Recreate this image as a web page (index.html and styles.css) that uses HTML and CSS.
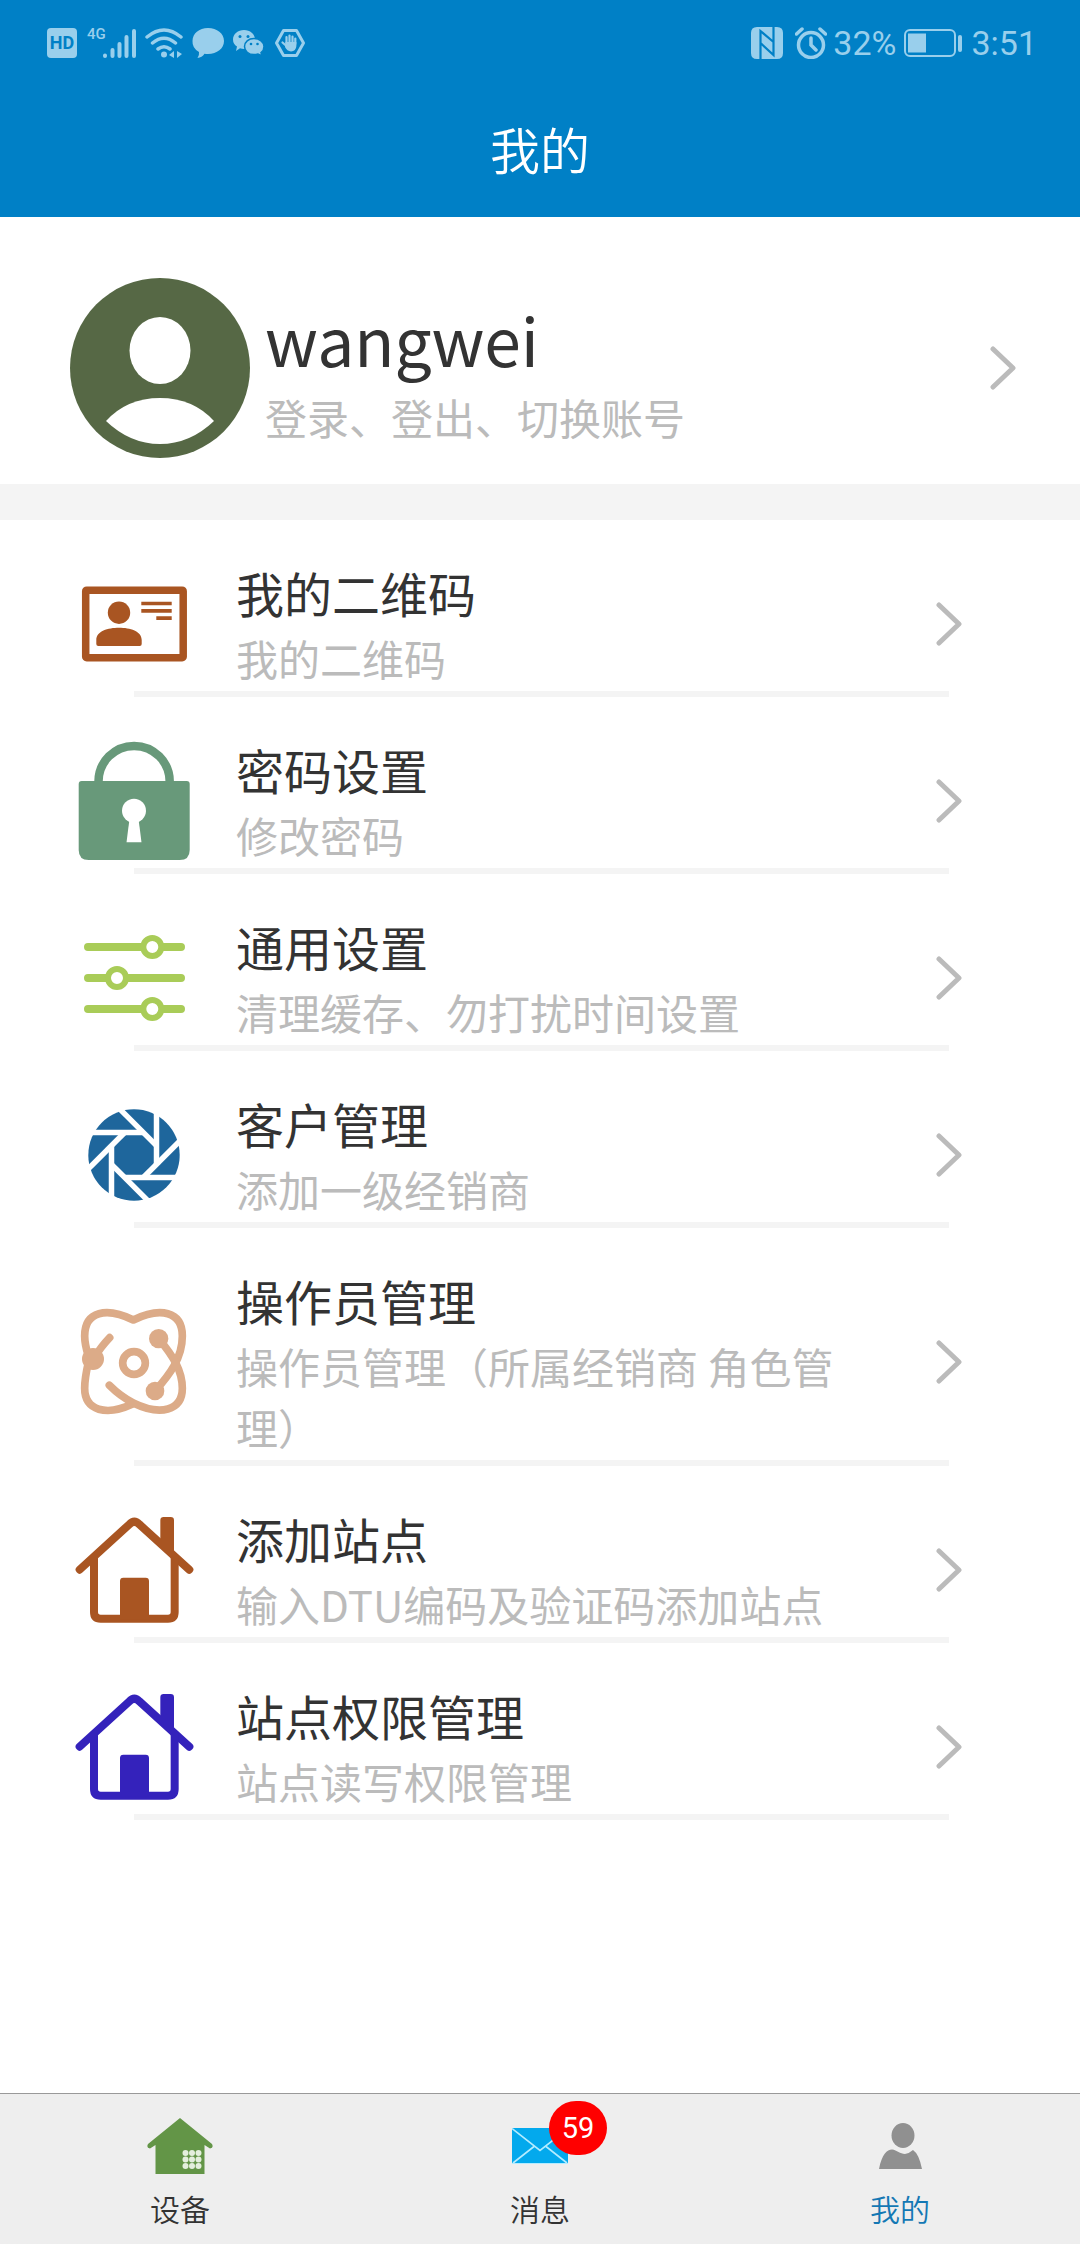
FILE: index.html
```
<!DOCTYPE html>
<html lang="zh-CN">
<head>
<meta charset="utf-8">
<meta name="viewport" content="width=device-width, initial-scale=1">
<title>我的</title>
<link rel="stylesheet" href="styles.css">
</head>
<body>
<svg class="defs" aria-hidden="true">
  <symbol id="chevron" viewBox="0 0 26 44">
    <path d="M3 3L23 22L3 41" fill="none" stroke="#bbb" stroke-width="5" stroke-linecap="round" stroke-linejoin="round"/>
  </symbol>
  <symbol id="house" viewBox="84 729 396 396">
    <path d="M119 926L268 790Q283 775 298 790L448 926" fill="none" stroke="currentColor" stroke-width="24" stroke-linecap="round"/>
    <path d="M162 885V1053Q162 1073 182 1073H384Q404 1073 404 1053V885" fill="none" stroke="currentColor" stroke-width="24"/>
    <path d="M361 835V778Q361 768 371 768H392Q402 768 402 778V875ZM240 1075V960Q240 950 250 950H317Q327 950 327 960V1075Z" fill="currentColor"/>
  </symbol>
</svg>

<header class="header">
  <div class="status">
    <div class="status-left">
      <span class="hd">HD</span>
      <span class="net">4G</span>
      <svg class="signal" width="33" height="32" viewBox="0 0 33 32" stroke="currentColor" stroke-width="4" stroke-linecap="round"><path d="M2 28.500V29M9.500 23V29M16.500 17V29M23.500 10V29M31 4V29"/></svg>
      <svg class="wifi" width="38" height="32" viewBox="0 0 38 32" fill="none" stroke="currentColor" stroke-width="3.500" stroke-linecap="round">
        <path d="M2 10Q19 -4 36 10M7.500 16Q19 6.500 30.500 16M13 22Q19 17.500 25 22"/>
        <circle cx="19" cy="27.500" r="3" fill="currentColor" stroke="none"/>
        <path d="M29 24V31L24 28ZM32 31V24L37 27Z" fill="currentColor" stroke="none"/>
      </svg>
      <svg class="bubble" width="32" height="32" viewBox="0 0 32 32" fill="currentColor"><path d="M16 1C25 1 32 6.500 32 14S25 27 16 27Q14 27 12.500 26.800Q10 30.500 5.500 31Q7.500 28 7 25Q0 21 .5 14C.5 6.500 7 1 16 1Z"/></svg>
      <svg class="wechat" width="32" height="28" viewBox="0 0 32 28">
        <path d="M11 1C17 1 22 5 22 10.500S17 20 11 20Q9 20 7 19.300L3 22L4 17.500Q0 15 0 10.500C0 5 5 1 11 1Z" fill="currentColor"/>
        <path d="M21 9.500C26.500 9.500 31 13 31 17.500Q31 21.500 28 23.500L29 27L25 25Q23 25.600 21 25.600C15.500 25.600 11.500 22 11.500 17.500S15.500 9.500 21 9.500Z" fill="currentColor" stroke="#0080c6" stroke-width="1.500"/>
        <g fill="#0080c6"><circle cx="7" cy="7.500" r="1.500"/><circle cx="15" cy="7.500" r="1.500"/><circle cx="18" cy="15" r="1.300"/><circle cx="24.500" cy="15" r="1.300"/></g>
      </svg>
      <svg class="stop" width="32" height="28" viewBox="0 0 32 28" fill="none" stroke="currentColor" stroke-linecap="round">
        <path d="M9.500 1.500H22.500L29.500 14L22.500 26.500H9.500L2.500 14Z" stroke-width="3" stroke-linejoin="round"/>
        <path d="M12.500 14V8M15.500 13V6.500M18.500 13V7.500M21.300 15V9.500M12.500 17L8.500 13.500" stroke-width="2.200"/>
        <path d="M11.400 13H22.400V17Q22 22 17 22.500Q13 22 11 18Z" fill="currentColor" stroke="none"/>
      </svg>
    </div>
    <div class="status-right">
      <svg class="nfc" width="32" height="32" viewBox="0 0 32 32"><path d="M6 0H26Q32 0 32 6V26Q32 32 26 32H6Q0 32 0 26V6Q0 0 6 0Z" fill="currentColor"/><path d="M9.500 32V4L22.500 15V0M9.500 16L22.500 28V10" fill="none" stroke="#0080c6" stroke-width="2.200"/></svg>
      <svg class="alarm" width="32" height="32" viewBox="0 0 32 32" fill="none" stroke="currentColor" stroke-width="3.500"><circle cx="16" cy="18" r="12.500"/><path d="M16 11V18L21 23M1.500 7L7 2M25 2L30.500 7" stroke-linecap="round"/></svg>
      <span class="percent">32%</span>
      <svg class="battery" width="59" height="28" viewBox="0 0 59 28"><rect x="1" y="1" width="50" height="26" rx="5" fill="none" stroke="currentColor" stroke-width="2"/><path d="M4 4.500H22V23.500H4Z" fill="currentColor"/><rect x="54" y="6" width="4" height="17" rx="2" fill="currentColor"/></svg>
      <span class="time">3:51</span>
    </div>
  </div>
  <h1 class="title">我的</h1>
</header>

<main class="main">
  <a class="profile" href="#account">
    <svg class="avatar" viewBox="0 0 180 180" aria-hidden="true"><circle cx="90" cy="90" r="90" fill="#566845"/><ellipse cx="90" cy="72.500" rx="30.500" ry="33.500" fill="#fff"/><path d="M36 143Q57 120 90 120T144 143Q120 166 90 166T36 143Z" fill="#fff"/></svg>
    <span class="profile-text">
      <span class="name">wangwei</span>
      <span class="sub">登录、登出、切换账号</span>
    </span>
    <svg class="chevron" aria-hidden="true"><use href="#chevron"/></svg>
  </a>

  <nav class="list">
    <a class="row" href="#qrcode">
      <svg class="icon" viewBox="0 0 132 132" aria-hidden="true" fill="#a95522"><rect x="17.700" y="32.200" width="97.500" height="67.500" rx="1" fill="none" stroke="#a95522" stroke-width="7.500"/><circle cx="51" cy="54.700" r="11.200"/><path d="M28.300 86V82C28.300 73 40 69.700 51 69.700S73.700 73 73.700 82V86Q73.700 88 71.700 88H30.300Q28.300 88 28.300 86ZM73.300 43.700H103.700V47.300H73.300ZM73.300 51H103.700V54.700H73.300ZM88.300 58.300H103.700V62H88.300Z"/></svg>
      <span class="text"><span class="label">我的二维码</span><span class="sub">我的二维码</span></span>
      <svg class="chevron" aria-hidden="true"><use href="#chevron"/></svg>
    </a>
    <a class="row" href="#password">
      <svg class="icon" viewBox="0 0 132 132" aria-hidden="true"><path d="M30.500 48V46.500A35.600 35.600 0 0 1 101.700 46.500V48" fill="none" stroke="#68997a" stroke-width="8.500"/><path d="M13.700 46H118.700Q121.700 46 121.700 49V115Q121.700 125 111.700 125H20.700Q10.700 125 10.700 115V49Q10.700 46 13.700 46Z" fill="#68997a"/><circle cx="66" cy="75.700" r="12" fill="#fff"/><path d="M61.500 84H70.500L73.500 107.300H58.500Z" fill="#fff"/></svg>
      <span class="text"><span class="label">密码设置</span><span class="sub">修改密码</span></span>
      <svg class="chevron" aria-hidden="true"><use href="#chevron"/></svg>
    </a>
    <a class="row" href="#settings">
      <svg class="icon" viewBox="0 0 132 132" aria-hidden="true" stroke="#a9cc58"><path d="M20 35H113M20 66H113M20 97H113" stroke-width="8" stroke-linecap="round"/><g fill="#fff" stroke-width="6"><circle cx="84.300" cy="35" r="9"/><circle cx="49" cy="66" r="9"/><circle cx="84.300" cy="97" r="9"/></g></svg>
      <span class="text"><span class="label">通用设置</span><span class="sub">清理缓存、勿打扰时间设置</span></span>
      <svg class="chevron" aria-hidden="true"><use href="#chevron"/></svg>
    </a>
    <a class="row" href="#customers">
      <svg class="icon" viewBox="-66 -66 132 132" aria-hidden="true"><circle r="45.700" fill="#1e669c"/><g stroke="#fff" stroke-width="5.500"><path id="blade" d="M-52 -22.500H10"/><use href="#blade" transform="rotate(45)"/><use href="#blade" transform="rotate(90)"/><use href="#blade" transform="rotate(135)"/><use href="#blade" transform="rotate(180)"/><use href="#blade" transform="rotate(225)"/><use href="#blade" transform="rotate(270)"/><use href="#blade" transform="rotate(315)"/></g></svg>
      <span class="text"><span class="label">客户管理</span><span class="sub">添加一级经销商</span></span>
      <svg class="chevron" aria-hidden="true"><use href="#chevron"/></svg>
    </a>
    <a class="row" href="#operators">
      <svg class="icon" viewBox="84 105 396 396" aria-hidden="true"><g fill="none" stroke="#dcab88" stroke-width="23" stroke-linecap="round" stroke-linejoin="round"><path d="M145 285C138 262 134 245 134 225C134 150 200 138 280 177C360 138 427 150 427 225C427 290 390 340 345 390"/><path d="M145 305C138 335 134 355 134 382C134 450 200 465 276 430"/><path d="M356 233C400 285 427 330 427 382C427 450 360 465 280 426C250 411 228 393 208 373"/><path d="M165 288C177 266 192 248 209 230"/><circle cx="282" cy="306" r="34"/></g><g fill="#dcab88"><circle cx="159" cy="294" r="33"/><circle cx="356" cy="233" r="29"/><circle cx="345" cy="390" r="28"/></g></svg>
      <span class="text"><span class="label">操作员管理</span><span class="sub">操作员管理（所属经销商 角色管理）</span></span>
      <svg class="chevron" aria-hidden="true"><use href="#chevron"/></svg>
    </a>
    <a class="row" href="#add-site">
      <svg class="icon icon-brown" aria-hidden="true"><use href="#house"/></svg>
      <span class="text"><span class="label">添加站点</span><span class="sub">输入DTU编码及验证码添加站点</span></span>
      <svg class="chevron" aria-hidden="true"><use href="#chevron"/></svg>
    </a>
    <a class="row" href="#site-rights">
      <svg class="icon icon-indigo" aria-hidden="true"><use href="#house"/></svg>
      <span class="text"><span class="label">站点权限管理</span><span class="sub">站点读写权限管理</span></span>
      <svg class="chevron" aria-hidden="true"><use href="#chevron"/></svg>
    </a>
  </nav>
</main>

<nav class="tabs">
  <a class="tab" href="#devices">
    <span class="tab-icon"><svg width="66" height="56" viewBox="0 0 66 56" aria-hidden="true"><path d="M33 0L65 26Q67 30 63 30.500L57.500 27V56H8.500V27L3 30.500Q-1 30 1 26Z" fill="#639547"/><g fill="#e4efdd"><circle cx="38.500" cy="35" r="3"/><circle cx="45" cy="35" r="3"/><circle cx="51.500" cy="35" r="3"/><circle cx="38.500" cy="41.500" r="3"/><circle cx="45" cy="41.500" r="3"/><circle cx="51.500" cy="41.500" r="3"/><circle cx="38.500" cy="48" r="3"/><circle cx="45" cy="48" r="3"/><circle cx="51.500" cy="48" r="3"/></g></svg></span>
    <span>设备</span>
  </a>
  <a class="tab" href="#messages">
    <span class="tab-icon"><svg width="56" height="36" viewBox="0 0 56 36" aria-hidden="true"><path d="M0 0H56V36H0Z" fill="#03a9ed"/><path d="M0 .5L28 22.500L56 .5M1 35L22 18.500M55 35L34 18.500" fill="none" stroke="#b4ecff" stroke-width="1.600"/><path d="M0 35.500H56" stroke="#b4ecff"/></svg><span class="badge">59</span></span>
    <span>消息</span>
  </a>
  <a class="tab tab-active" href="#me">
    <span class="tab-icon"><svg width="43" height="46" viewBox="0 0 43 46" aria-hidden="true" fill="#909090"><ellipse cx="24" cy="12.500" rx="11.500" ry="12.500"/><path d="M0 46C3 31 8 26.500 13 26.500C18 27 21 31 26 31Q30 30.500 34 27Q40 31 43 46Z"/></svg></span>
    <span>我的</span>
  </a>
</nav>
</body>
</html>
```
FILE: styles.css
```
* {
  box-sizing: border-box;
}

body {
  margin: 0;
  min-height: 100vh;
  display: flex;
  flex-direction: column;
  background: #fff;
  color: #333;
  font-family: "Noto Sans CJK SC", sans-serif;
  font-weight: 400;
}

a {
  color: inherit;
  text-decoration: none;
}

svg {
  flex: none;
}

.defs {
  position: absolute;
  width: 0;
  height: 0;
}

/* Header */
.header {
  background: #0080c6;
  color: #fff;
}

.status {
  display: flex;
  justify-content: space-between;
  align-items: center;
  height: 86px;
  padding: 0 43px 0 47px;
  color: #99cfec;
  font-family: Roboto, sans-serif;
  font-size: 34px;
  font-weight: 400;
}

.status-left,
.status-right {
  display: flex;
  align-items: center;
}

.hd {
  width: 30px;
  margin-right: 10px;
  border-radius: 4px;
  background: #99cfec;
  color: #0080c6;
  font-size: 18px;
  font-weight: 700;
  line-height: 30px;
  text-align: center;
}

.net {
  align-self: flex-start;
  font-size: 15px;
  font-weight: 500;
  line-height: 14px;
}

.signal {
  margin-left: -3px;
}

.wifi,
.bubble,
.wechat,
.stop {
  margin-left: 9px;
}

.alarm {
  margin-left: 12px;
}

.percent {
  margin: 0 8px 0 6px;
}

.time {
  margin-left: 8px;
}

.title {
  margin: 0;
  padding-bottom: 6px;
  font-size: 50px;
  font-weight: 350;
  line-height: 125px;
  text-align: center;
}

/* Account */
.profile {
  display: flex;
  align-items: center;
  padding: 61px 64px 26px 70px;
  border-bottom: 36px solid #f4f4f4;
}

.avatar {
  width: 180px;
  height: 180px;
  margin-right: 15px;
}

.profile-text,
.text {
  flex: 1;
  min-width: 0;
}

.name,
.label,
.sub {
  display: block;
}

.name {
  font-size: 66px;
  line-height: 96px;
}

.label {
  font-size: 48px;
  line-height: 69px;
}

.sub {
  color: #bbb;
  font-size: 42px;
  line-height: 61px;
}

.chevron {
  width: 26px;
  height: 44px;
}

/* Menu */
.row {
  display: flex;
  flex-wrap: wrap;
  align-items: center;
  padding: 36px 118px 0 68px;
}

.row::after {
  content: "";
  flex: none;
  width: calc(100% - 79px);
  height: 6px;
  margin-left: 66px;
  background: #f4f4f4;
}

.icon {
  width: 132px;
  height: 132px;
}

.text {
  padding: 2px 0 3px;
  margin: 0 74px 0 36px;
}

.icon-brown {
  color: #a95522;
}

.icon-indigo {
  color: #3422bb;
}

/* Tab bar */
.tabs {
  display: flex;
  margin-top: auto;
  border-top: 1px solid #999;
  background: #eee;
}

.tab {
  flex: 1;
  display: flex;
  flex-direction: column;
  align-items: center;
  gap: 12px;
  padding: 22px 0 16px;
  font-size: 30px;
  font-weight: 350;
  line-height: 40px;
}

.tab-active {
  color: #1478b4;
}

.tab-icon {
  position: relative;
  display: flex;
  align-items: center;
  height: 60px;
}

.badge {
  position: absolute;
  top: -15px;
  left: 37px;
  min-width: 58px;
  border-radius: 28px;
  background: #f00;
  color: #fff;
  font-family: Roboto, sans-serif;
  font-size: 29px;
  font-weight: 400;
  line-height: 54px;
  text-align: center;
}
```
